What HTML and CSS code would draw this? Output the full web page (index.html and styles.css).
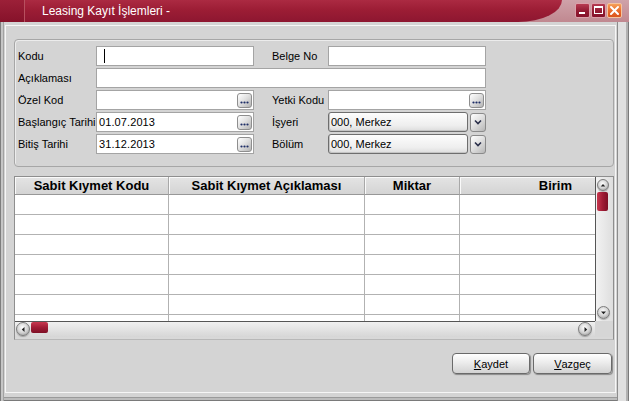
FILE: index.html
```html
<!DOCTYPE html>
<html lang="tr">
<head>
<meta charset="utf-8">
<title>Leasing Kayıt İşlemleri</title>
<link rel="stylesheet" href="styles.css">
</head>
<body>
<div class="window">
  <div class="titlebar">
    <div class="tb-main">
      <div class="tb-icon"></div>
      <div class="tb-title">Leasing Kayıt İşlemleri -</div>
    </div>
    <div class="tb-right">
      <span class="cb"><svg width="13" height="13" viewBox="0 0 13 13"><rect x="3" y="8" width="6" height="2" fill="#fff"/></svg></span>
      <span class="cb"><svg width="13" height="13" viewBox="0 0 13 13"><rect x="2.5" y="2.5" width="8" height="7" fill="none" stroke="#fff"/><rect x="2.5" y="2.5" width="8" height="1.5" fill="#fff"/></svg></span>
      <span class="cb cb-close"><svg width="13" height="13" viewBox="0 0 13 13"><path d="M3 3 L10 10 M10 3 L3 10" stroke="#fff" stroke-width="2" stroke-linecap="round"/></svg></span>
    </div>
  </div>
  <div class="frame">
    <div class="client">
      <div class="group">
        <div class="lbl">Kodu</div>
        <div class="inp"><span class="caret"></span></div>
        <div class="lbl lbl-r">Belge No</div>
        <div class="inp"></div>

        <div class="lbl">Açıklaması</div>
        <div class="inp wide"></div>

        <div class="lbl">Özel Kod</div>
        <div class="inp"><span class="val"></span><span class="dots"><svg width="13" height="13" viewBox="0 0 13 13"><circle cx="3.5" cy="8.5" r="1.1" fill="#1d2d66"/><circle cx="6.5" cy="8.5" r="1.1" fill="#1d2d66"/><circle cx="9.5" cy="8.5" r="1.1" fill="#1d2d66"/></svg></span></div>
        <div class="lbl lbl-r">Yetki Kodu</div>
        <div class="inp"><span class="val"></span><span class="dots"><svg width="13" height="13" viewBox="0 0 13 13"><circle cx="3.5" cy="8.5" r="1.1" fill="#1d2d66"/><circle cx="6.5" cy="8.5" r="1.1" fill="#1d2d66"/><circle cx="9.5" cy="8.5" r="1.1" fill="#1d2d66"/></svg></span></div>

        <div class="lbl">Başlangıç Tarihi</div>
        <div class="inp"><span class="val">01.07.2013</span><span class="dots"><svg width="13" height="13" viewBox="0 0 13 13"><circle cx="3.5" cy="8.5" r="1.1" fill="#1d2d66"/><circle cx="6.5" cy="8.5" r="1.1" fill="#1d2d66"/><circle cx="9.5" cy="8.5" r="1.1" fill="#1d2d66"/></svg></span></div>
        <div class="lbl lbl-r">İşyeri</div>
        <div class="combo"><span class="combo-box">000, Merkez</span><span class="dd"><svg width="14" height="16" viewBox="0 0 14 16"><polyline points="4,6.5 7,9.5 10,6.5" fill="none" stroke="#2a2f4a" stroke-width="1.6"/></svg></span></div>

        <div class="lbl">Bitiş Tarihi</div>
        <div class="inp"><span class="val">31.12.2013</span><span class="dots"><svg width="13" height="13" viewBox="0 0 13 13"><circle cx="3.5" cy="8.5" r="1.1" fill="#1d2d66"/><circle cx="6.5" cy="8.5" r="1.1" fill="#1d2d66"/><circle cx="9.5" cy="8.5" r="1.1" fill="#1d2d66"/></svg></span></div>
        <div class="lbl lbl-r">Bölüm</div>
        <div class="combo"><span class="combo-box">000, Merkez</span><span class="dd"><svg width="14" height="16" viewBox="0 0 14 16"><polyline points="4,6.5 7,9.5 10,6.5" fill="none" stroke="#2a2f4a" stroke-width="1.6"/></svg></span></div>
      </div>

      <div class="grid">
        <div class="table">
          <div class="th">Sabit Kıymet Kodu</div>
          <div class="th">Sabit Kıymet Açıklaması</div>
          <div class="th">Miktar</div>
          <div class="th th-last">Birim</div>

          <div class="td"></div><div class="td"></div><div class="td"></div><div class="td"></div>
          <div class="td"></div><div class="td"></div><div class="td"></div><div class="td"></div>
          <div class="td"></div><div class="td"></div><div class="td"></div><div class="td"></div>
          <div class="td"></div><div class="td"></div><div class="td"></div><div class="td"></div>
          <div class="td"></div><div class="td"></div><div class="td"></div><div class="td"></div>
          <div class="td"></div><div class="td"></div><div class="td"></div><div class="td"></div>
          <div class="td"></div><div class="td"></div><div class="td"></div><div class="td"></div>
        </div>
        <div class="vscroll">
          <span class="arr arr-up"><svg width="11" height="11" viewBox="0 0 11 11"><path d="M3 6.5 L5.5 3.8 L8 6.5 Z" fill="#222"/></svg></span>
          <span class="vthumb"></span>
          <span class="vspace"></span>
          <span class="arr arr-down"><svg width="11" height="11" viewBox="0 0 11 11"><path d="M3 4.5 L5.5 7.2 L8 4.5 Z" fill="#222"/></svg></span>
        </div>
        <div class="hscroll">
          <span class="arr arr-h"><svg width="11" height="11" viewBox="0 0 11 11"><path d="M6.5 3 L3.8 5.5 L6.5 8 Z" fill="#222"/></svg></span>
          <span class="hthumb"></span>
          <span class="hspace"></span>
          <span class="arr arr-h"><svg width="11" height="11" viewBox="0 0 11 11"><path d="M4.5 3 L7.2 5.5 L4.5 8 Z" fill="#222"/></svg></span>
        </div>
        <div class="corner"></div>
      </div>

      <div class="actions">
        <button class="btn" type="button"><u>K</u>aydet</button>
        <button class="btn" type="button"><u>V</u>azgeç</button>
      </div>
    </div>
  </div>
</div>
</body>
</html>
```
FILE: styles.css
```css
* { box-sizing: border-box; }

html, body {
  margin: 0;
  padding: 0;
}

body {
  width: 629px;
  height: 401px;
  overflow: hidden;
  background: #d4d4d4;
  font-family: "Liberation Sans", Arial, sans-serif;
  font-size: 11px;
  color: #000;
}

.window {
  width: 629px;
  height: 401px;
  display: flex;
  flex-direction: column;
}

/* ---------- title bar ---------- */
.titlebar {
  height: 22px;
  flex: none;
  display: flex;
  background: linear-gradient(#cfa2a9, #c08890);
}

.tb-main {
  width: 562px;
  display: flex;
  background: linear-gradient(#ab2a42, #9c1d35 45%, #8d1630);
  border-bottom-right-radius: 44px 22px;
}

.tb-icon {
  width: 25px;
  background: linear-gradient(#9c2038, #86122a);
  border-right: 1px solid #b8505f;
}

.tb-title {
  padding-left: 17px;
  color: #fff;
  font-size: 12px;
  line-height: 22px;
  white-space: nowrap;
}

.tb-right {
  flex: 1;
  display: flex;
  justify-content: flex-end;
  align-items: flex-start;
  gap: 1px;
  padding: 3px 7px 0 0;
}

.cb {
  width: 15px;
  height: 15px;
  border: 1px solid #dba0aa;
  border-radius: 2px;
  background: linear-gradient(#b73c52, #921a32 55%, #86132b);
  display: flex;
}

.cb-close {
  border-color: #f4c3a0;
  background: linear-gradient(#f6a15a, #ea6c2c 50%, #da541d);
}

/* ---------- frame & client ---------- */
.frame {
  flex: 1;
  display: flex;
  flex-direction: column;
  padding: 3px 13px 8px 5px;
  box-shadow:
    inset 1px 0 0 #7e7e7e,
    inset 3px 0 0 #c6c6c6,
    inset 4px 0 0 #a2a2a2,
    inset -1px 0 0 #7a7a7a,
    inset -3px 0 0 #b2b2b2,
    inset -11px 0 0 #e0e0e0,
    inset -12px 0 0 #8c8c8c,
    inset 0 -1px 0 #7a7a7a,
    inset 0 -3px 0 #bcbcbc,
    inset 0 -4px 0 #9a9a9a;
}

.client {
  flex: 1;
  display: flex;
  flex-direction: column;
  border: 1px solid #f6f6f6;
  padding: 13px 1px 0 8px;
}

/* ---------- top group ---------- */
.group {
  display: grid;
  grid-template-columns: 78px 158px 74px 158px;
  grid-auto-rows: 20px;
  row-gap: 2px;
  padding: 6px 0 12px 3px;
  border: 1px solid #a6a6a6;
  border-radius: 4px;
  box-shadow: inset 1px 1px 0 #ececec;
}

.lbl {
  align-self: center;
  white-space: nowrap;
  line-height: 13px;
}

.lbl-r {
  padding-left: 18px;
}

.inp {
  background: #fff;
  border: 1px solid #a4a4a4;
  display: flex;
  align-items: center;
  justify-content: space-between;
  padding: 0 1px 0 2px;
  font-size: 11px;
}

.inp.wide {
  grid-column: 2 / 5;
}

.caret {
  width: 1px;
  height: 14px;
  margin-left: 5px;
  background: #000;
}

.val {
  white-space: nowrap;
  letter-spacing: 0.1px;
}

.dots {
  width: 15px;
  height: 15px;
  border: 1px solid #8e8e8e;
  border-radius: 3px;
  background: linear-gradient(135deg, #ffffff, #e2e2e2 45%, #b4b4b4);
  display: flex;
}

.combo {
  display: flex;
  align-items: center;
  gap: 2px;
}

.combo-box {
  flex: 1;
  height: 20px;
  display: flex;
  align-items: center;
  padding-left: 2px;
  border: 1px solid #6e6e6e;
  border-radius: 3px;
  background: linear-gradient(#fdfdfd, #eeeeee 70%, #dcdcdc);
  box-shadow: inset 1px -1px 0 #c4c4c4;
  white-space: nowrap;
}

.dd {
  width: 16px;
  height: 19px;
  border: 1px solid #8a8a8a;
  border-radius: 3px;
  background: linear-gradient(135deg, #ffffff, #e2e2e2 45%, #b6b6b6);
  display: flex;
  justify-content: center;
  align-items: center;
}

/* ---------- data grid ---------- */
.grid {
  margin-top: 9px;
  display: grid;
  grid-template-columns: 580px 18px;
  grid-template-rows: 144px 16px;
  padding-bottom: 2px;
  border: 1px solid #8e8e8e;
  border-bottom-color: #b8b8b8;
  background: #d8d8d8;
}

.table {
  display: grid;
  grid-template-columns: 154px 196px 95px 135px;
  grid-template-rows: 18px;
  grid-auto-rows: 20px;
  overflow: hidden;
  background: #fff;
}

.th {
  display: flex;
  align-items: center;
  justify-content: center;
  font-weight: bold;
  font-size: 13px;
  white-space: nowrap;
  background: linear-gradient(#e4e4e4, #d4d4d4);
  border-right: 1px solid #a8a8a8;
  border-bottom: 1px solid #979797;
  box-shadow: inset 1px 1px 0 #fafafa;
}

.th-last {
  justify-content: flex-end;
  padding-right: 23px;
  border-right: none;
}

.td {
  border-right: 1px solid #b2b2b2;
  border-bottom: 1px solid #b2b2b2;
}

.td:nth-child(4n) {
  border-right: none;
}

.vscroll {
  display: flex;
  flex-direction: column;
  align-items: flex-start;
  padding: 2px 0 2px 1px;
  border-left: 1px solid #555;
  background: linear-gradient(to right, #f2f2f2, #dedede);
}

.arr {
  width: 13px;
  height: 13px;
  flex: none;
  border-radius: 50%;
  border: 1px solid #7c7c7c;
  background: radial-gradient(circle at 45% 38%, #ffffff, #d4d4d4 50%, #8e8e8e);
  box-shadow: 0 1px 1px rgba(0, 0, 0, 0.25);
  display: flex;
  justify-content: center;
  align-items: center;
}

.arr-up {
  width: 12px;
  height: 12px;
}

.arr-h {
  width: 14px;
  height: 14px;
}

.vthumb {
  width: 11px;
  height: 19px;
  margin-top: 1px;
  border-radius: 2px;
  background: linear-gradient(to right, #c8384f, #a01c35 50%, #7e0f25);
}

.vspace {
  flex: 1;
}

.hscroll {
  display: flex;
  align-items: flex-start;
  padding: 0 3px 0 1px;
  border-top: 1px solid #555;
  background: linear-gradient(#f0f0f0, #d6d6d6);
}

.hthumb {
  width: 17px;
  height: 11px;
  margin-left: 1px;
  border-radius: 2px;
  background: linear-gradient(#c8384f, #a01c35 50%, #7e0f25);
}

.hspace {
  flex: 1;
}

.corner {
  background: #d6d6d6;
}

/* ---------- buttons ---------- */
.actions {
  display: flex;
  justify-content: flex-end;
  gap: 3px;
  margin-top: 13px;
  padding-right: 2px;
}

.btn {
  width: 78px;
  height: 21px;
  margin: 0;
  padding: 0;
  border: 1px solid #6a6a6a;
  border-radius: 4px;
  background: linear-gradient(#ffffff, #ececec 45%, #d2d2d2);
  box-shadow: 1px 1px 1px rgba(0, 0, 0, 0.35);
  font-family: "Liberation Sans", Arial, sans-serif;
  font-size: 11px;
  color: #000;
  display: flex;
  align-items: center;
  justify-content: center;
}

.btn + .btn {
  width: 79px;
}
```
